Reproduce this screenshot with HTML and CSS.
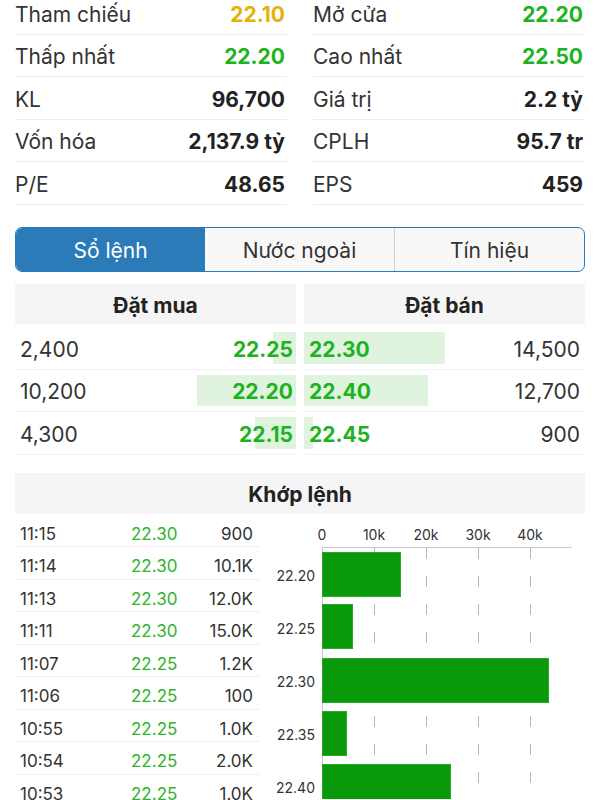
FILE: index.html
```html
<!DOCTYPE html>
<html lang="vi">
<head>
    <meta charset="UTF-8">
    <meta name="viewport" content="width=device-width, initial-scale=1.0">
    <title>Chi tiết cổ phiếu</title>
    <link rel="stylesheet" href="styles.css">
</head>
<body>
    <div class="page">
        <div class="stats">
            <div class="stat"><span class="label">Tham chiếu</span><span class="value ref">22.10</span></div>
            <div class="stat"><span class="label">Mở cửa</span><span class="value up">22.20</span></div>
            <div class="stat"><span class="label">Thấp nhất</span><span class="value up">22.20</span></div>
            <div class="stat"><span class="label">Cao nhất</span><span class="value up">22.50</span></div>
            <div class="stat"><span class="label">KL</span><span class="value">96,700</span></div>
            <div class="stat"><span class="label">Giá trị</span><span class="value">2.2 tỷ</span></div>
            <div class="stat"><span class="label">Vốn hóa</span><span class="value">2,137.9 tỷ</span></div>
            <div class="stat"><span class="label">CPLH</span><span class="value">95.7 tr</span></div>
            <div class="stat"><span class="label">P/E</span><span class="value">48.65</span></div>
            <div class="stat"><span class="label">EPS</span><span class="value">459</span></div>
        </div>

        <div class="tabs">
            <div class="tab active">Sổ lệnh</div>
            <div class="tab">Nước ngoài</div>
            <div class="tab">Tín hiệu</div>
        </div>

        <div class="book">
            <div class="book-side buy">
                <div class="book-head">Đặt mua</div>
                <div class="book-row"><div class="depth" style="width:23px"></div><span class="qty">2,400</span><span class="price">22.25</span></div>
                <div class="book-row"><div class="depth" style="width:99px"></div><span class="qty">10,200</span><span class="price">22.20</span></div>
                <div class="book-row"><div class="depth" style="width:41px"></div><span class="qty">4,300</span><span class="price">22.15</span></div>
            </div>
            <div class="book-side sell">
                <div class="book-head">Đặt bán</div>
                <div class="book-row"><div class="depth" style="width:141px"></div><span class="price">22.30</span><span class="qty">14,500</span></div>
                <div class="book-row"><div class="depth" style="width:124px"></div><span class="price">22.40</span><span class="qty">12,700</span></div>
                <div class="book-row"><div class="depth" style="width:9px"></div><span class="price">22.45</span><span class="qty">900</span></div>
            </div>
        </div>

        <div class="match">
            <div class="match-head">Khớp lệnh</div>
            <div class="match-body">
                <div class="ticks">
                    <div class="tick"><span>11:15</span><span class="tick-price">22.30</span><span class="tick-vol">900</span></div>
                    <div class="tick"><span>11:14</span><span class="tick-price">22.30</span><span class="tick-vol">10.1K</span></div>
                    <div class="tick"><span>11:13</span><span class="tick-price">22.30</span><span class="tick-vol">12.0K</span></div>
                    <div class="tick"><span>11:11</span><span class="tick-price">22.30</span><span class="tick-vol">15.0K</span></div>
                    <div class="tick"><span>11:07</span><span class="tick-price">22.25</span><span class="tick-vol">1.2K</span></div>
                    <div class="tick"><span>11:06</span><span class="tick-price">22.25</span><span class="tick-vol">100</span></div>
                    <div class="tick"><span>10:55</span><span class="tick-price">22.25</span><span class="tick-vol">1.0K</span></div>
                    <div class="tick"><span>10:54</span><span class="tick-price">22.25</span><span class="tick-vol">2.0K</span></div>
                    <div class="tick"><span>10:53</span><span class="tick-price">22.25</span><span class="tick-vol">1.0K</span></div>
                </div>

                <!-- volume by price, 10k = 52px -->
                <svg class="chart" width="325" height="283" viewBox="0 0 325 283">
                    <g class="axis-text" text-anchor="middle">
                        <text x="62" y="24">0</text>
                        <text x="114" y="24">10k</text>
                        <text x="166" y="24">20k</text>
                        <text x="218" y="24">30k</text>
                        <text x="270" y="24">40k</text>
                    </g>
                    <g stroke="#b5b5b5" stroke-width="1" stroke-dasharray="11 17">
                        <line x1="114.5" y1="32" x2="114.5" y2="283"/>
                        <line x1="166.5" y1="32" x2="166.5" y2="283"/>
                        <line x1="218.5" y1="32" x2="218.5" y2="283"/>
                        <line x1="270.5" y1="32" x2="270.5" y2="283"/>
                    </g>
                    <line x1="62" y1="31.5" x2="312" y2="31.5" stroke="#c8c8c8"/>
                    <line x1="62.5" y1="31" x2="62.5" y2="283" stroke="#c8c8c8"/>
                    <g fill="#0a990a" stroke="#27a827" stroke-width="1">
                        <rect x="62.5" y="36.5" width="78" height="44"/>
                        <rect x="62.5" y="88.5" width="30" height="44"/>
                        <rect x="62.5" y="142.5" width="226" height="44"/>
                        <rect x="62.5" y="195.5" width="24" height="44"/>
                        <rect x="62.5" y="248.5" width="128" height="44"/>
                    </g>
                    <g class="axis-text" text-anchor="end">
                        <text x="55" y="65">22.20</text>
                        <text x="55" y="118">22.25</text>
                        <text x="55" y="171">22.30</text>
                        <text x="55" y="224">22.35</text>
                        <text x="55" y="277">22.40</text>
                    </g>
                </svg>
            </div>
        </div>
    </div>
</body>
</html>
```

FILE: styles.css
```css
body {
    margin: 0;
    padding: 0;
    background: #fff;
    font-family: Inter, "Noto Sans", sans-serif;
    color: #333;
    overflow: hidden;
}
.page {
    padding: 0 15px;
}

/* summary */
.stats {
    display: grid;
    grid-template-columns: 1fr 1fr;
    column-gap: 26px;
    margin-top: -8px;
}
.stat {
    display: flex;
    justify-content: space-between;
    align-items: center;
    box-sizing: border-box;
    height: 42.5px;
    padding: 3px 2px 0 0;
    border-bottom: 1px solid #ececec;
    font-size: 21px;
}
.label {
    color: #333;
}
.value {
    font-weight: 700;
    color: #222;
}
.value.ref {
    color: #e3b10b;
}
.value.up {
    color: #1db31d;
}

/* tabs */
.tabs {
    display: flex;
    margin-top: 22.5px;
    height: 43px;
    border: 1.5px solid #2b7bb9;
    border-radius: 7px;
    overflow: hidden;
    background: #f8f8f8;
}
.tab {
    flex: 1;
    display: flex;
    align-items: center;
    justify-content: center;
    padding-top: 2px;
    font-size: 21px;
    color: #333;
}
.tab + .tab {
    border-left: 1px solid #cfcfcf;
}
.tab.active {
    background: #2b7bb9;
    color: #fff;
}
.tab.active + .tab {
    border-left: none;
}

/* order book */
.book {
    display: grid;
    grid-template-columns: 1fr 1fr;
    column-gap: 8px;
    margin-top: 12px;
}
.book-head {
    height: 40px;
    line-height: 43px;
    background: #f5f5f5;
    text-align: center;
    font-size: 21px;
    font-weight: 700;
    color: #222;
    margin-bottom: 3px;
}
.book-row {
    position: relative;
    display: flex;
    justify-content: space-between;
    align-items: center;
    box-sizing: border-box;
    height: 42.5px;
    padding-top: 3px;
    border-bottom: 1px solid #efefef;
    font-size: 21px;
}
.depth {
    position: absolute;
    top: 5px;
    bottom: 5px;
    background: #dff3df;
}
.buy .depth {
    right: 0;
}
.sell .depth {
    left: 0;
}
.book-row span {
    position: relative;
}
.buy .book-row {
    padding-left: 5px;
    padding-right: 3px;
}
.sell .book-row {
    padding-left: 5px;
    padding-right: 5px;
}
.qty {
    color: #333;
}
.price {
    font-weight: 700;
    color: #1db31d;
}

/* matched orders */
.match {
    margin-top: 18px;
}
.match-head {
    height: 41px;
    line-height: 44px;
    background: #f5f5f5;
    text-align: center;
    font-size: 21px;
    font-weight: 700;
    color: #222;
}
.match-body {
    display: flex;
    padding-top: 1px;
}
.ticks {
    width: 245px;
    flex: none;
}
.tick {
    display: grid;
    grid-template-columns: 111px auto 1fr;
    align-items: center;
    box-sizing: border-box;
    height: 32.5px;
    padding: 7px 7px 0 5px;
    border-bottom: 1px solid #efefef;
    font-size: 17px;
    color: #333;
}
.tick-price {
    color: #2db52d;
}
.tick-vol {
    text-align: right;
}
.chart {
    flex: none;
    display: block;
    margin-top: 1px;
}
.axis-text {
    font-family: Inter, "Noto Sans", sans-serif;
    font-size: 14px;
    fill: #333;
}
```
